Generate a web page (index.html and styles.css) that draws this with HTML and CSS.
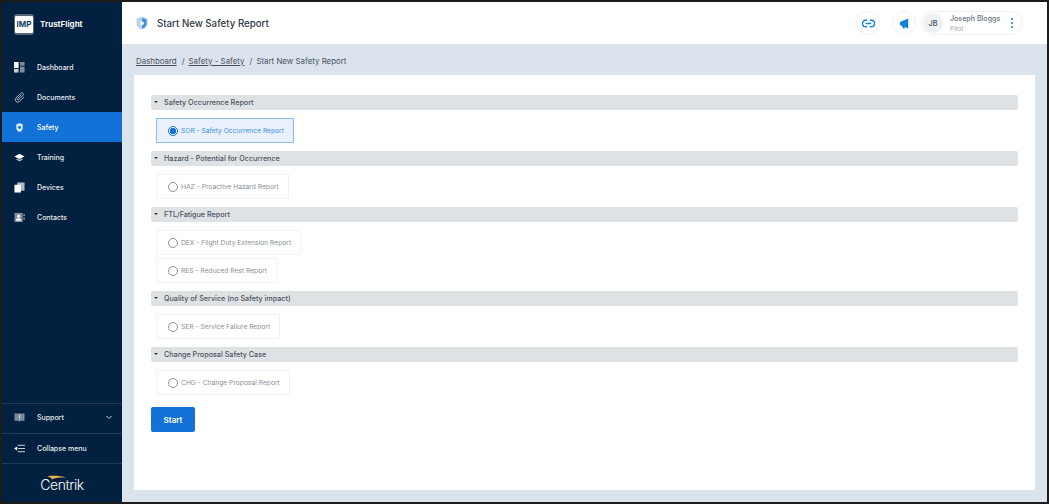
FILE: index.html
```html
<!DOCTYPE html>
<html lang="en">
<head>
<meta charset="utf-8">
<title>Start New Safety Report</title>
<link rel="stylesheet" href="styles.css">
</head>
<body>
<div class="frame">
  <aside class="sidebar">
    <div class="brand">
      <span class="brand-logo">IMP</span>
      <span class="brand-name">TrustFlight</span>
    </div>
    <nav class="nav">
      <a class="nav-item">
        <svg class="nav-icon" viewBox="0 0 12 12"><rect x="0" y="0" width="5" height="6.5" fill="#fff"/><rect x="0" y="7.5" width="5" height="4" fill="#c5ced8"/><rect x="6.500" y="0" width="5" height="4" fill="#7d8b9c"/><rect x="6.500" y="5" width="5" height="6.500" fill="#7d8b9c"/></svg>
        <span>Dashboard</span>
      </a>
      <a class="nav-item">
        <svg class="nav-icon" viewBox="0 0 12 12"><path d="M10.800 5.500 6 10.200a2.600 2.600 0 0 1-3.900-3.600L7.200 1.400a1.700 1.700 0 0 1 2.500 2.400L5 8.500a.8.8 0 0 1-1.200-1.200L8 3" fill="none" stroke="#dfe4ea" stroke-width=".8"/></svg>
        <span>Documents</span>
      </a>
      <a class="nav-item nav-item-active">
        <svg class="nav-icon" viewBox="0 0 12 12"><path d="M6 1 9.500 2.800v3.700C9.500 8.800 7.800 10.300 6 11 4.200 10.300 2.500 8.800 2.500 6.500V2.800z" fill="#dbe9f8"/><circle cx="6" cy="6" r="1.600" fill="#1272d8"/></svg>
        <span>Safety</span>
      </a>
      <a class="nav-item">
        <svg class="nav-icon" viewBox="0 0 12 12"><path d="M6 2 11.500 5 6 7.500.5 5z" fill="#fff"/><path d="M2.800 7v1.500L6 10l3.200-1.500V7L6 8.500z" fill="#c5ced8"/></svg>
        <span>Training</span>
      </a>
      <a class="nav-item">
        <svg class="nav-icon" viewBox="0 0 12 12"><rect x="3.500" y="0.500" width="8" height="9" fill="#aeb8c4"/><rect x="0.500" y="3" width="7" height="8.500" fill="#fff"/></svg>
        <span>Devices</span>
      </a>
      <a class="nav-item">
        <svg class="nav-icon" viewBox="0 0 12 12"><rect x="0.500" y="1" width="9" height="10" fill="#7d8b9c"/><circle cx="5" cy="4.500" r="1.700" fill="#fff"/><path d="M2 9.500c0-2 1.500-2.700 3-2.700s3 .7 3 2.700z" fill="#fff"/><rect x="10.500" y="2" width="1" height="2.500" fill="#c5ced8"/><rect x="10.500" y="6" width="1" height="2.500" fill="#c5ced8"/></svg>
        <span>Contacts</span>
      </a>
    </nav>
    <div class="side-foot">
      <a class="nav-item foot-item foot-support">
        <svg class="nav-icon" viewBox="0 0 12 12"><path d="M.5 1.500h11v8H7L6 11 5 9.500H.5z" fill="#7d8b9c"/><rect x="5.500" y="3" width="1" height="4" fill="#dfe4ea"/></svg>
        <span>Support</span>
        <svg class="chevron" viewBox="0 0 8 8"><path d="M1.500 3 4 5.500 6.500 3" fill="none" stroke="#cfd6de" stroke-width="1"/></svg>
      </a>
      <a class="nav-item foot-item">
        <svg class="nav-icon" viewBox="0 0 12 12"><path d="M4 2.500h8M4 9.500h8M4.500 6H12" stroke="#dfe4ea" stroke-width="1" fill="none"/><path d="M0 6 3.500 3.800v4.400z" fill="#fff"/></svg>
        <span>Collapse menu</span>
      </a>
      <div class="centrik">
        <svg class="centrik-swoosh" viewBox="0 0 26 8"><path d="M0 1.500C8 .5 18 1 26 3.500 18 3 11 3.500 6 6 6.500 4 4 2.500 0 1.500z" fill="#e8b34a"/></svg>
        <span>Centrik</span>
      </div>
    </div>
  </aside>
  <div class="main">
    <header class="topbar">
      <div class="page-title">
        <svg class="title-icon" viewBox="0 0 14 14"><path d="M7 .5 12.500 2.500v5C12.500 10.500 9.500 13 7 13.500 4.500 13 1.500 10.500 1.500 7.500v-5z" fill="#b9d4ef"/><path d="M7 2 11.500 3.600v4C11.500 10 9 12.200 7 12.600z" fill="#3f8fdc"/><circle cx="7" cy="7.200" r="2" fill="#e8f1fb"/></svg>
        <h1>Start New Safety Report</h1>
      </div>
      <div class="top-actions">
        <span class="round-btn">
          <svg class="round-icon" viewBox="0 0 14 14"><path d="M5.500 3.500H4a3.500 3.500 0 0 0 0 7h1.500M8.500 3.500H10a3.500 3.500 0 0 1 0 7H8.500M4 7h6" fill="none" stroke="#0f82dc" stroke-width="1.500"/></svg>
        </span>
        <span class="round-btn round-btn-wide">
          <svg class="round-icon" viewBox="0 0 14 14"><path d="M2 5.500 11 1.500v11L2 8.500z" fill="#0f82dc"/><path d="M4 9 5.500 12.500h2L6.500 9.500z" fill="#0f82dc"/></svg>
        </span>
        <div class="user">
          <span class="avatar">JB</span>
          <div class="user-text">
            <span class="user-name">Joseph Bloggs</span>
            <span class="user-role">Pilot</span>
          </div>
          <svg class="dots" viewBox="0 0 4 12"><circle cx="2" cy="2" r="1" fill="#1272d8"/><circle cx="2" cy="6" r="1" fill="#1272d8"/><circle cx="2" cy="10" r="1" fill="#1272d8"/></svg>
        </div>
      </div>
    </header>
    <div class="crumbs">
      <a>Dashboard</a><span class="sep">/</span><a>Safety - Safety</a><span class="sep">/</span><span>Start New Safety Report</span>
    </div>
    <section class="card">
      <div class="group">
        <div class="group-bar"><i class="caret"></i>Safety Occurrence Report</div>
        <label class="option option-on"><span class="radio"></span>SOR - Safety Occurrence Report</label>
      </div>
      <div class="group">
        <div class="group-bar"><i class="caret"></i>Hazard - Potential for Occurrence</div>
        <label class="option"><span class="radio"></span>HAZ - Proactive Hazard Report</label>
      </div>
      <div class="group">
        <div class="group-bar"><i class="caret"></i>FTL/Fatigue Report</div>
        <label class="option"><span class="radio"></span>DEX - Flight Duty Extension Report</label>
        <label class="option"><span class="radio"></span>RES - Reduced Rest Report</label>
      </div>
      <div class="group">
        <div class="group-bar"><i class="caret"></i>Quality of Service (no Safety impact)</div>
        <label class="option"><span class="radio"></span>SER - Service Failure Report</label>
      </div>
      <div class="group">
        <div class="group-bar"><i class="caret"></i>Change Proposal Safety Case</div>
        <label class="option"><span class="radio"></span>CHG - Change Proposal Report</label>
      </div>
      <button class="start" type="button">Start</button>
    </section>
  </div>
</div>
</body>
</html>
```
FILE: styles.css
```css
* { box-sizing: border-box; }
html, body { margin: 0; padding: 0; }
body {
  width: 1049px;
  height: 504px;
  overflow: hidden;
  font-family: Inter, "Liberation Sans", sans-serif;
  background: #1c1c1c;
}
.frame {
  display: flex;
  width: 1049px;
  height: 504px;
  border: 2px solid #1c1c1c;
}
.sidebar {
  width: 120px;
  flex: none;
  display: flex;
  flex-direction: column;
  background: #02203f;
  color: #fff;
}
.brand {
  height: 50px;
  display: flex;
  align-items: center;
  gap: 6px;
  padding: 0 0 6px 12px;
}
.brand-logo {
  width: 20px;
  height: 21px;
  display: flex;
  align-items: center;
  justify-content: center;
  background: #fff;
  border: 1px solid #56677c;
  border-width: 2px 1px;
  border-radius: 3px;
  color: #0d3f5e;
  font-size: 8px;
  font-weight: 700;
}
.brand-name { font-size: 8px; font-weight: 700; color: #f3f5f8; }
.nav { display: flex; flex-direction: column; flex: 1; }
.nav-item {
  height: 30px;
  display: flex;
  align-items: center;
  gap: 12px;
  padding-left: 12px;
  font-size: 7px;
  font-weight: 500;
  color: #e8ecf1;
}
.nav-item-active { background: #1272d8; color: #fff; }
.nav-icon { width: 11px; height: 11px; flex: none; }
.side-foot { display: flex; flex-direction: column; }
.foot-item { border-top: 1px solid #1c3a59; padding-bottom: 1px; }
.foot-support { padding-bottom: 3px; }
.chevron { width: 8px; height: 8px; margin-left: auto; margin-right: 9px; }
.centrik {
  position: relative;
  height: 39px;
  border-top: 1px solid #1c3a59;
  display: flex;
  align-items: center;
  justify-content: center;
  padding-top: 3px;
  font-size: 14px;
  font-weight: 300;
  color: #fff;
  letter-spacing: -.45px;
}
.centrik-swoosh {
  position: absolute;
  left: 45px;
  top: 11px;
  width: 20px;
  height: 6px;
}
.main {
  flex: 1;
  min-width: 0;
  display: flex;
  flex-direction: column;
  background: #dbe4ec;
}
.topbar {
  height: 42px;
  flex: none;
  background: #fff;
  display: flex;
  align-items: center;
  justify-content: space-between;
  padding: 0 24px 0 13px;
}
.page-title { display: flex; align-items: center; gap: 8px; }
.title-icon { width: 14px; height: 14px; }
h1 {
  margin: 0;
  font-size: 9.700px;
  font-weight: 500;
  color: #2f3a48;
}
.top-actions { display: flex; align-items: center; }
.round-btn {
  width: 24px;
  height: 24px;
  border: 1px solid #eef1f4;
  border-radius: 50%;
  display: flex;
  align-items: center;
  justify-content: center;
  margin-right: 12px;
}
.round-btn-wide { margin-right: 5px; }
.round-icon { width: 13px; height: 13px; }
.user {
  width: 102px;
  height: 24px;
  border: 1px solid #eef1f4;
  border-radius: 12px;
  display: flex;
  align-items: center;
  gap: 7px;
}
.avatar {
  width: 20px;
  height: 20px;
  margin-left: 1px;
  border-radius: 50%;
  background: #f0f1f3;
  display: flex;
  align-items: center;
  justify-content: center;
  font-size: 7.500px;
  font-weight: 500;
  color: #4a5361;
}
.user-text { display: flex; flex-direction: column; gap: 2px; flex: 1; padding-top: 1px; }
.user-name { font-size: 7.100px; color: #6a7280; font-weight: 500; }
.user-role { font-size: 6.500px; color: #a3a9b1; }
.dots { width: 4px; height: 12px; margin-right: 8px; }
.crumbs {
  height: 31px;
  flex: none;
  display: flex;
  align-items: center;
  padding: 2px 0 0 14px;
  font-size: 7.900px;
  color: #4a5361;
}
.crumbs a { text-decoration: underline; }
.sep { margin: 0 4px 0 5px; }
.card {
  width: 901px;
  height: 415px;
  margin-left: 12px;
  background: #fff;
  padding: 20px 17px;
}
.group { display: flex; flex-direction: column; align-items: flex-start; gap: 3px; margin-bottom: 8px; }
.group-bar {
  width: 867px;
  height: 14.500px;
  margin-bottom: 5.500px;
  background: #dfe2e5;
  border-radius: 2px;
  display: flex;
  align-items: center;
  padding-left: 2px;
  font-size: 7.200px;
  font-weight: 500;
  color: #4a5361;
}
.caret {
  width: 0;
  height: 0;
  margin: 0 6px 0 1px;
  border-left: 2px solid transparent;
  border-right: 2px solid transparent;
  border-top: 2.500px solid #2a3240;
}
.option {
  height: 25px;
  margin-left: 5px;
  padding: 0 9px 0 11px;
  border: 1px solid #f0f1f3;
  display: flex;
  align-items: center;
  gap: 3px;
  font-size: 6.700px;
  color: #8a909a;
}
.radio {
  width: 10px;
  height: 10px;
  border: 1px solid #8f9398;
  border-radius: 50%;
  background: #fff;
  flex: none;
}
.option-on {
  background: #e8f1fc;
  border-color: #8dbdf0;
  color: #3f8ee4;
}
.option-on .radio {
  border-color: #1272d8;
  background: radial-gradient(circle, #1272d8 0 3px, #fff 3.500px);
}
.start {
  display: block;
  width: 44px;
  height: 25px;
  margin-top: 12px;
  border: none;
  border-radius: 2px;
  background: #1272d8;
  color: #fff;
  font-family: inherit;
  font-size: 8px;
  font-weight: 600;
  padding: 0;
}
```
